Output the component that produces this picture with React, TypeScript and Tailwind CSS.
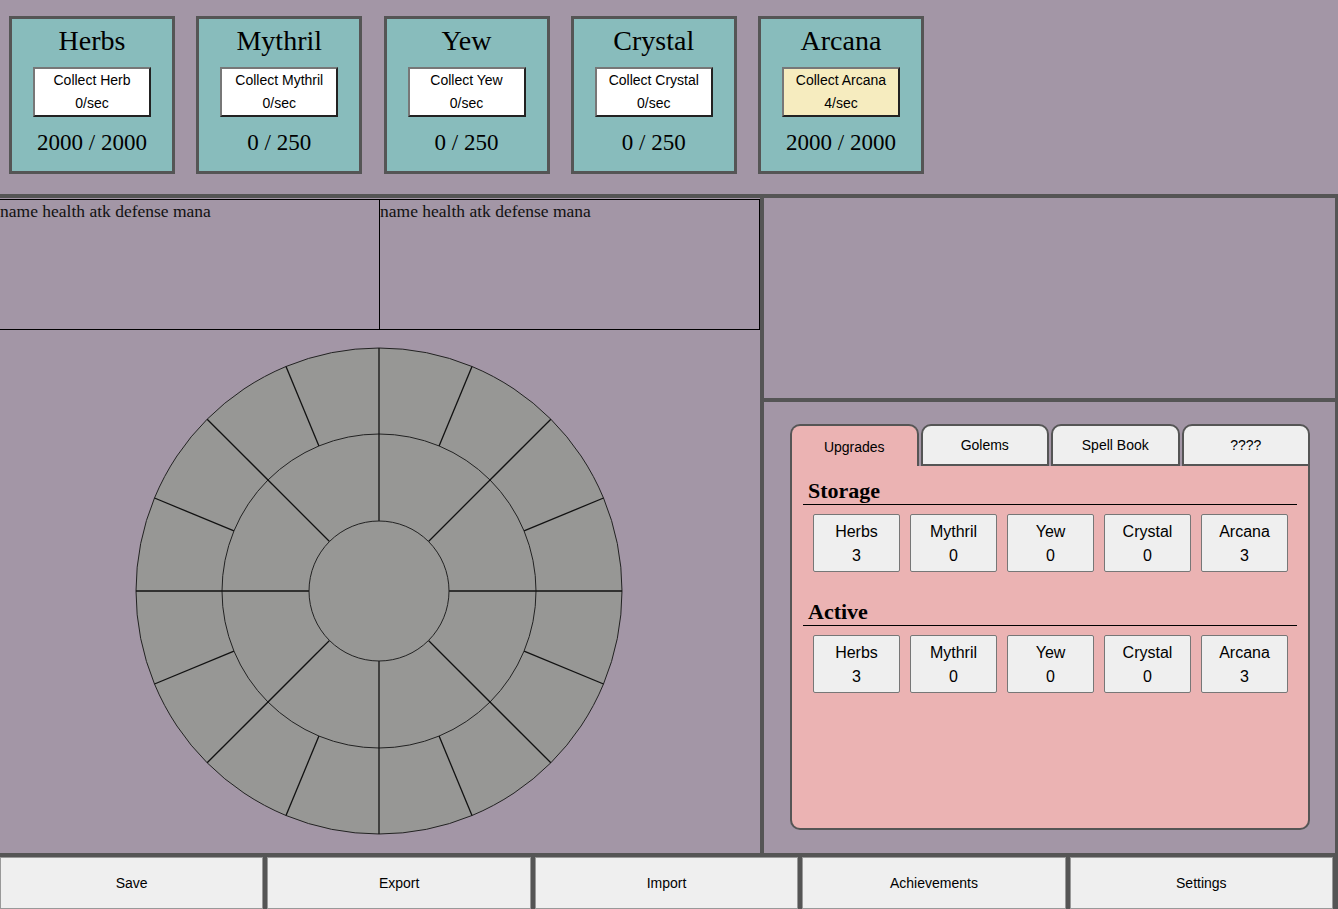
import React from "react";

const resources = [
  { name: "Herbs", label: "Collect Herb", rate: "0/sec", count: "2000 / 2000", active: false },
  { name: "Mythril", label: "Collect Mythril", rate: "0/sec", count: "0 / 250", active: false },
  { name: "Yew", label: "Collect Yew", rate: "0/sec", count: "0 / 250", active: false },
  { name: "Crystal", label: "Collect Crystal", rate: "0/sec", count: "0 / 250", active: false },
  { name: "Arcana", label: "Collect Arcana", rate: "4/sec", count: "2000 / 2000", active: true },
];

const storage = [
  { name: "Herbs", value: 3 },
  { name: "Mythril", value: 0 },
  { name: "Yew", value: 0 },
  { name: "Crystal", value: 0 },
  { name: "Arcana", value: 3 },
];

const tabs = ["Upgrades", "Golems", "Spell Book", "????"];
const footer = ["Save", "Export", "Import", "Achievements", "Settings"];

const serif = "font-['Liberation_Serif',serif]";
const sans = "font-['Liberation_Sans',Arial,sans-serif]";

function Wheel() {
  const c = 244;
  const outer = 243;
  const mid = 157;
  const inner = 70;
  const spokes = [];
  for (let i = 0; i < 16; i++) {
    const a = (i * 22.5 * Math.PI) / 180;
    const start = i % 2 === 0 ? inner : mid;
    spokes.push(
      <line
        key={i}
        x1={c + Math.cos(a) * start}
        y1={c + Math.sin(a) * start}
        x2={c + Math.cos(a) * outer}
        y2={c + Math.sin(a) * outer}
        stroke="#111"
        strokeWidth={1.3}
      />
    );
  }
  return (
    <svg width={488} height={488} viewBox="0 0 488 488">
      <circle cx={c} cy={c} r={outer} fill="#979795" stroke="#222" strokeWidth={1} />
      <circle cx={c} cy={c} r={mid} fill="none" stroke="#222" strokeWidth={1} />
      {spokes}
      <circle cx={c} cy={c} r={inner} fill="#979795" stroke="#222" strokeWidth={1} />
    </svg>
  );
}

function ItemGrid() {
  return (
    <div className="flex gap-[10px] pl-[21px] mt-[9px]">
      {storage.map((s) => (
        <div
          key={s.name}
          className={`w-[87px] h-[58px] bg-[#efefef] border border-[#777] rounded-[2px] flex flex-col items-center justify-center pt-px text-[16px] leading-[24px] text-black ${sans}`}
        >
          <span>{s.name}</span>
          <span>{s.value}</span>
        </div>
      ))}
    </div>
  );
}

export default function App() {
  return (
    <div className="h-[909px] w-full bg-[#555] flex flex-col gap-[4px] overflow-hidden">
      {/* Resource header */}
      <div className="h-[194px] shrink-0 bg-[#a396a6] flex gap-[21.25px] pl-[9px] pt-[16px]">
        {resources.map((r) => (
          <div
            key={r.name}
            className="w-[166px] h-[158px] bg-[#88bcbc] border-[3px] border-[#555] flex flex-col items-center text-black"
          >
            <div className={`mt-[6px] text-[28px] leading-[32px] ${serif}`}>{r.name}</div>
            <button
              className={`mt-[10px] w-[118px] h-[50px] border-2 border-t-[#777] border-l-[#777] border-b-[#222] border-r-[#222] flex flex-col items-center justify-center text-[14px] leading-[23px] ${sans} ${
                r.active ? "bg-[#f6ecbf]" : "bg-white"
              }`}
            >
              <span>{r.label}</span>
              <span>{r.rate}</span>
            </button>
            <div className={`mt-[12px] text-[23px] leading-[27px] ${serif}`}>{r.count}</div>
          </div>
        ))}
      </div>

      {/* Middle */}
      <div className="h-[655px] shrink-0 flex gap-[4px] pr-[3px]">
        <div className="w-[760px] bg-[#a396a6] flex flex-col">
          <div className={`flex mt-px text-[17.5px] leading-[20px] text-[#111] ${serif}`}>
            <div className="w-[380px] h-[131px] border-y border-r border-black pt-[1px]">
              name health atk defense mana
            </div>
            <div className="w-[380px] h-[131px] border-y border-r border-black pt-[1px]">
              name health atk defense mana
            </div>
          </div>
          <div className="flex justify-center mt-[17px] pr-[2px]">
            <Wheel />
          </div>
        </div>

        <div className="flex-1 flex flex-col gap-[4px]">
          <div className="h-[200px] bg-[#a396a6]" />
          <div className="flex-1 bg-[#a396a6] pl-[26px] pt-[22px]">
            <div className="w-[520px] h-[406px] flex flex-col">
              <div className="flex gap-[2px] h-[42px] shrink-0">
                {tabs.map((t, i) => (
                  <div
                    key={t}
                    className={`flex-1 rounded-t-[10px] border-2 border-[#555] flex items-center justify-center text-[14px] text-black ${sans} ${
                      i === 0 ? "bg-[#ebb3b3] border-b-0 pt-[2px]" : "bg-[#efefef]"
                    }`}
                  >
                    {t}
                  </div>
                ))}
              </div>
              <div className="flex-1 bg-[#ebb3b3] border-2 border-t-0 border-[#555] rounded-b-[10px] text-black">
                <h3 className={`mt-[15px] mx-[11px] pl-[5px] border-b border-black text-[22px] leading-[20px] pb-[3px] font-bold ${serif}`}>
                  Storage
                </h3>
                <ItemGrid />
                <h3 className={`mt-[30px] mx-[11px] pl-[5px] border-b border-black text-[22px] leading-[20px] pb-[3px] font-bold ${serif}`}>
                  Active
                </h3>
                <ItemGrid />
              </div>
            </div>
          </div>
        </div>
      </div>

      {/* Footer */}
      <div className="h-[52px] shrink-0 flex gap-[4px] pr-[5px]">
        {footer.map((f) => (
          <button
            key={f}
            className={`flex-1 bg-[#efefef] border border-[#999] text-[14px] text-black ${sans}`}
          >
            {f}
          </button>
        ))}
      </div>
    </div>
  );
}
